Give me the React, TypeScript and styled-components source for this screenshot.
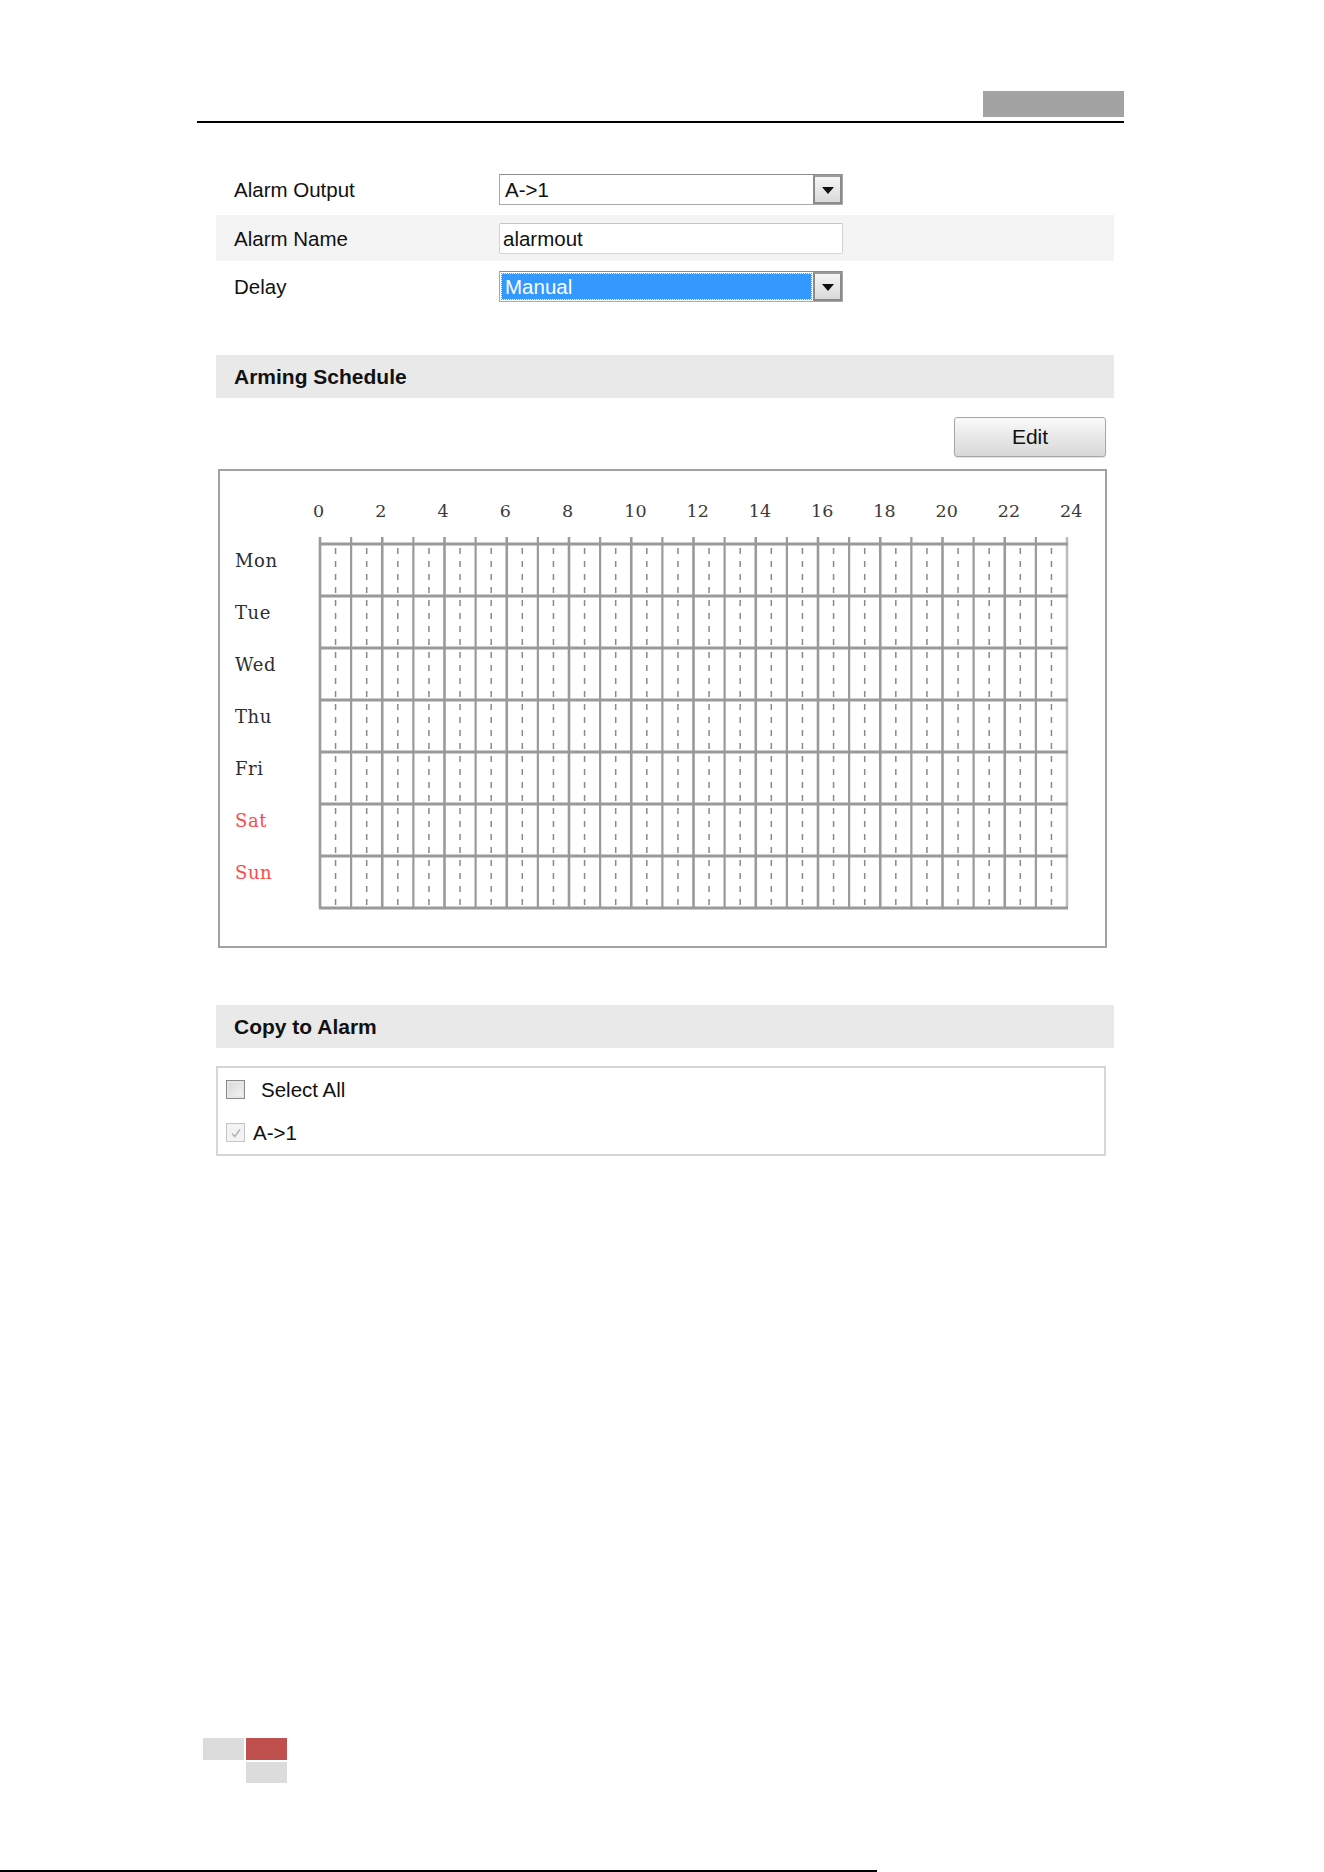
import React from 'react';
import styled, { createGlobalStyle } from 'styled-components';

const GlobalStyle = createGlobalStyle`
  html, body { margin: 0; padding: 0; background: #ffffff; }
  body { font-family: "Liberation Sans", Arial, sans-serif; color: #111; }
  * { box-sizing: border-box; }
`;

const Page = styled.div`
  width: 1324px;
  height: 1872px;
  display: flex;
  flex-direction: column;
  overflow: hidden;
`;

const TopBar = styled.header`
  margin: 91px 0 0 197px;
  width: 927px;
  display: flex;
  flex-direction: column;
  align-items: flex-end;
`;

const TopTag = styled.div`
  width: 141px;
  height: 26px;
  background: #a3a3a3;
`;

const TopRule = styled.div`
  align-self: stretch;
  height: 2px;
  margin-top: 4px;
  background: #000;
`;

const Content = styled.main`
  margin: 47px 0 0 216px;
  width: 898px;
  display: flex;
  flex-direction: column;
`;

const FormRow = styled.div<{ $shaded?: boolean; $h: number; $pt?: number; $pb?: number }>`
  display: grid;
  grid-template-columns: 283px 344px;
  align-items: center;
  height: ${(p) => p.$h}px;
  padding-top: ${(p) => p.$pt ?? 0}px;
  padding-bottom: ${(p) => p.$pb ?? 0}px;
  background: ${(p) => (p.$shaded ? '#f4f4f4' : 'transparent')};
`;

const Label = styled.span`
  padding-left: 18px;
  font-size: 20.5px;
  color: #111;
`;

const SelectBox = styled.div`
  display: flex;
  height: 31px;
  border: 1px solid #a9a9a9;
  border-top-color: #8d8d8d;
  background: #fff;
`;

const SelectValue = styled.div<{ $focused?: boolean }>`
  flex: 1;
  display: flex;
  align-items: center;
  font-size: 20.5px;
  padding-left: ${(p) => (p.$focused ? '3px' : '5px')};
  margin: ${(p) => (p.$focused ? '2px' : '0')};
  color: ${(p) => (p.$focused ? '#fff' : '#111')};
  background: ${(p) => (p.$focused ? '#3399ff' : 'transparent')};
  outline: ${(p) => (p.$focused ? '1px dotted #c9822e' : 'none')};
`;

const DropButton = styled.div`
  width: 29px;
  display: flex;
  align-items: center;
  justify-content: center;
  border: 2px solid #8a8a8a;
  border-top-color: #9a9a9a;
  background: linear-gradient(#f6f6f6, #d9d9d9);
`;

const Caret = styled.span`
  width: 0;
  height: 0;
  border-left: 6px solid transparent;
  border-right: 6px solid transparent;
  border-top: 7px solid #111;
  margin-top: 2px;
`;

const TextInput = styled.div`
  height: 31px;
  display: flex;
  align-items: center;
  padding-left: 3px;
  font-size: 20.5px;
  color: #111;
  background: #fff;
  border: 1px solid #d2d2d2;
  border-top-color: #c4c4c4;
  border-radius: 2px;
`;

const SectionHeader = styled.h2<{ $mt: number }>`
  margin: ${(p) => p.$mt}px 0 0;
  height: 43px;
  display: flex;
  align-items: center;
  padding-left: 18px;
  background: #e9e9e9;
  font-size: 21px;
  font-weight: bold;
  color: #111;
`;

const ToolRow = styled.div`
  display: flex;
  justify-content: flex-end;
  margin-top: 19px;
  padding-right: 8px;
`;

const EditButton = styled.button`
  width: 152px;
  height: 40px;
  border: 1px solid #a6a6a6;
  border-radius: 3px;
  background: linear-gradient(#fafafa, #e8e8e8 50%, #d8d8d8);
  box-shadow: 0 1px 1px rgba(0, 0, 0, 0.12);
  font-family: "Liberation Sans", Arial, sans-serif;
  font-size: 21px;
  color: #111;
  padding: 0;
`;

const ScheduleBox = styled.div`
  margin: 12px 0 0 2px;
  width: 889px;
  height: 479px;
  border: 2px solid #a2a2a2;
`;

const ChartSvg = styled.svg`
  display: block;
`;

const HourText = styled.text`
  font-family: "DejaVu Serif", "Liberation Serif", serif;
  font-size: 17.5px;
  fill: #3a3a3a;
`;

const DayText = styled.text<{ $weekend?: boolean }>`
  font-family: "DejaVu Serif", "Liberation Serif", serif;
  font-size: 18px;
  letter-spacing: 0.6px;
  fill: ${(p) => (p.$weekend ? '#ff4a4a' : '#2e2e2e')};
`;

const CopyBox = styled.div`
  margin-top: 18px;
  width: 890px;
  height: 90px;
  border: 2px solid #d6d6d6;
  display: flex;
  flex-direction: column;
  padding-left: 8px;
`;

const CheckRow = styled.label`
  height: 43px;
  display: flex;
  align-items: center;
  font-size: 20.5px;
  color: #111;
`;

const CheckBox = styled.span<{ $disabled?: boolean; $gap: number; $size: number }>`
  width: ${(p) => p.$size}px;
  height: ${(p) => p.$size}px;
  margin-right: ${(p) => p.$gap}px;
  display: flex;
  align-items: center;
  justify-content: center;
  border: 1px solid ${(p) => (p.$disabled ? '#c4c4c4' : '#8a8a8a')};
  background: ${(p) =>
    p.$disabled ? '#f3f3f3' : 'linear-gradient(135deg, #d4d4d4, #f6f6f6)'};
  box-shadow: inset 0 0 0 2px ${(p) => (p.$disabled ? '#f3f3f3' : '#e6e6e6')};
`;

const Footer = styled.footer`
  margin: auto 0 0 203px;
  display: grid;
  grid-template-columns: 41px 41px;
  grid-template-rows: 22px 21px;
  gap: 2px;
`;

const FooterCell = styled.div<{ $tone: 'gray' | 'red' | 'none' }>`
  background: ${(p) => (p.$tone === 'gray' ? '#dcdcdc' : p.$tone === 'red' ? '#c0504d' : 'transparent')};
`;

const BottomRule = styled.div`
  margin-top: 87px;
  width: 877px;
  height: 2px;
  background: #000;
`;

const DAYS = [
  { name: 'Mon', weekend: false },
  { name: 'Tue', weekend: false },
  { name: 'Wed', weekend: false },
  { name: 'Thu', weekend: false },
  { name: 'Fri', weekend: false },
  { name: 'Sat', weekend: true },
  { name: 'Sun', weekend: true },
];

const GX = 100;
const GY = 73;
const GW = 747;
const CW = GW / 24;
const RH = 52;
const GH = RH * 7;

function ScheduleChart() {
  const hours = Array.from({ length: 25 }, (_, i) => i);
  const halves = Array.from({ length: 24 }, (_, i) => i + 0.5);
  const rows = Array.from({ length: 8 }, (_, i) => i);
  return (
    <ChartSvg width={885} height={475} viewBox="0 0 885 475">
      {hours
        .filter((h) => h % 2 === 0)
        .map((h) => (
          <HourText key={`t${h}`} x={GX + h * CW - 7} y={46}>
            {h}
          </HourText>
        ))}
      {hours.map((h) => (
        <line
          key={`v${h}`}
          x1={GX + h * CW}
          x2={GX + h * CW}
          y1={66}
          y2={GY + GH}
          stroke={h === 24 ? '#bdbdbd' : '#9a9a9a'}
          strokeWidth={h % 2 === 0 ? 2.6 : 2.2}
        />
      ))}
      {halves.map((h) => (
        <line
          key={`d${h}`}
          x1={GX + h * CW}
          x2={GX + h * CW}
          y1={GY + 4}
          y2={GY + GH}
          stroke="#8a8a8a"
          strokeWidth={1.5}
          strokeDasharray="6 7"
        />
      ))}
      {rows.map((r) => (
        <line
          key={`h${r}`}
          x1={GX - 1}
          x2={GX + GW + 1}
          y1={GY + r * RH}
          y2={GY + r * RH}
          stroke="#9a9a9a"
          strokeWidth={3}
        />
      ))}
      {DAYS.map((d, i) => (
        <DayText key={d.name} $weekend={d.weekend} x={15} y={GY + i * RH + 23}>
          {d.name}
        </DayText>
      ))}
    </ChartSvg>
  );
}

function CheckMark() {
  return (
    <svg width="12" height="12" viewBox="0 0 12 12">
      <path d="M2 6.5 L4.8 9.5 L10 2.5" fill="none" stroke="#b5b5b5" strokeWidth="1.6" />
    </svg>
  );
}

export default function App() {
  return (
    <Page>
      <GlobalStyle />
      <TopBar>
        <TopTag />
        <TopRule />
      </TopBar>
      <Content>
        <FormRow $h={45} $pb={6}>
          <Label>Alarm Output</Label>
          <SelectBox>
            <SelectValue>A-&gt;1</SelectValue>
            <DropButton>
              <Caret />
            </DropButton>
          </SelectBox>
        </FormRow>
        <FormRow $h={46} $pt={1} $shaded>
          <Label>Alarm Name</Label>
          <TextInput>alarmout</TextInput>
        </FormRow>
        <FormRow $h={45} $pt={6}>
          <Label>Delay</Label>
          <SelectBox>
            <SelectValue $focused>Manual</SelectValue>
            <DropButton>
              <Caret />
            </DropButton>
          </SelectBox>
        </FormRow>

        <SectionHeader $mt={49}>Arming Schedule</SectionHeader>
        <ToolRow>
          <EditButton type="button">Edit</EditButton>
        </ToolRow>
        <ScheduleBox>
          <ScheduleChart />
        </ScheduleBox>

        <SectionHeader $mt={57}>Copy to Alarm</SectionHeader>
        <CopyBox>
          <CheckRow>
            <CheckBox $size={19} $gap={16} />
            Select All
          </CheckRow>
          <CheckRow>
            <CheckBox $size={19} $gap={8} $disabled>
              <CheckMark />
            </CheckBox>
            A-&gt;1
          </CheckRow>
        </CopyBox>
      </Content>
      <Footer>
        <FooterCell $tone="gray" />
        <FooterCell $tone="red" />
        <FooterCell $tone="none" />
        <FooterCell $tone="gray" />
      </Footer>
      <BottomRule />
    </Page>
  );
}
